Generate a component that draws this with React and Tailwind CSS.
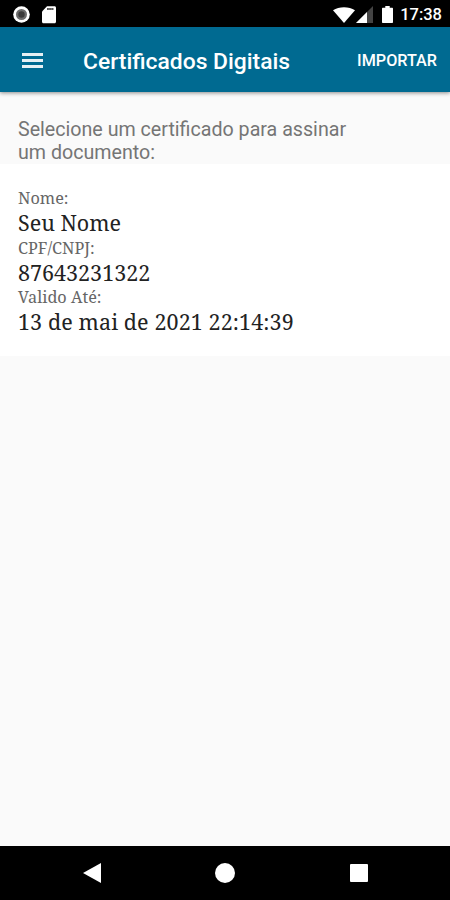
const fields = [
  { label: 'Nome:', value: 'Seu Nome', spacing: 'tracking-normal' },
  { label: 'CPF/CNPJ:', value: '87643231322', spacing: 'tracking-normal' },
  { label: 'Valido Até:', value: '13 de mai de 2021 22:14:39', spacing: 'tracking-[0.1px]' },
];

function StatusBar() {
  return (
    <div className="flex h-[27px] shrink-0 items-center bg-black pt-[2px] pr-[8px] pl-[13px] text-white">
      <svg className="h-[18px] w-[18px]" viewBox="0 0 18 18">
        <circle cx="8.5" cy="8.5" r="8.3" fill="#fff" />
        <circle cx="8.5" cy="8.5" r="5.5" fill="#6b6b6b" />
        <circle cx="8.5" cy="8.5" r="3.2" fill="#3a3a3a" />
      </svg>
      <svg className="ml-[11px] h-[18px] w-[14px]" viewBox="0 0 14 18">
        <path d="M5 .3h7.5c.9 0 1.5.6 1.5 1.5v14c0 .9-.6 1.5-1.5 1.5h-11C.6 17.3 0 16.7 0 15.8V5.5z" fill="#fff" />
        <path d="M5 3h6.500" stroke="#555" strokeWidth="2" />
        <path d="M7 2v2M9.300 2v2" stroke="#999" strokeWidth=".6" />
      </svg>
      <svg className="ml-auto h-[18px] w-[22px]" viewBox="0 0 22 18">
        <path d="M0 4.3C6 .2 16 .2 22 4.3L11 17z" fill="#fff" />
      </svg>
      <svg className="ml-[1px] h-[18px] w-[17px]" viewBox="0 0 17 18">
        <path d="M17 0v17H0z" fill="#444" />
        <path d="M11 6v11H0z" fill="#fff" />
      </svg>
      <svg className="ml-[9px] h-[18px] w-[11px]" viewBox="0 0 11 18">
        <path d="M3.3 0h4.4v1.7H10c.6 0 1 .4 1 1V16c0 .6-.4 1-1 1H1c-.6 0-1-.4-1-1V2.7c0-.6.4-1 1-1h2.300z" fill="#fff" />
      </svg>
      <span className="ml-[7px] pt-[2px] text-[16.500px] leading-none font-medium">17:38</span>
    </div>
  );
}

function AppBar() {
  return (
    <header className="z-10 flex h-[65px] shrink-0 items-center bg-[#006a91] pt-[2px] pr-[13px] pl-[22px] text-white shadow-[0_1px_4px_rgba(0,0,0,0.45)]">
      <button className="flex flex-col gap-[3px]" aria-label="Menu">
        <span className="h-[3px] w-[21px] bg-white/90" />
        <span className="h-[3px] w-[21px] bg-white/90" />
        <span className="h-[3px] w-[21px] bg-white/90" />
      </button>
      <h1 className="ml-[40px] pt-[4px] text-[22.850px] leading-none font-medium whitespace-nowrap">Certificados Digitais</h1>
      <button className="ml-auto pt-[2px] text-[16.200px] leading-none font-medium">IMPORTAR</button>
    </header>
  );
}

function CertificateCard() {
  return (
    <section className="h-[192px] bg-white pt-[23px] pl-[18px] font-['Noto_Serif',serif]">
      {fields.map((field) => (
        <div key={field.label} className="h-[49.500px] whitespace-nowrap">
          <p className="h-[23px] text-[16.250px] leading-[23px] text-[#666]">{field.label}</p>
          <p className={`h-[26px] text-[21.500px] leading-[26.500px] text-[#222] ${field.spacing}`}>{field.value}</p>
        </div>
      ))}
    </section>
  );
}

function NavBar() {
  return (
    <nav className="flex h-[54px] shrink-0 items-center bg-black pl-[83px]">
      <svg className="h-[20px] w-[18px]" viewBox="0 0 18 20">
        <path d="M18 0v20L0 10z" fill="#fff" />
      </svg>
      <span className="ml-[114px] h-[20px] w-[20px] rounded-full bg-white" />
      <span className="ml-[115px] h-[18px] w-[18px] rounded-[1px] bg-white" />
    </nav>
  );
}

export default function App() {
  return (
    <div className="flex h-[900px] w-[450px] flex-col overflow-hidden bg-[#fafafa] font-['Roboto',sans-serif]">
      <StatusBar />
      <AppBar />
      <main className="flex-1">
        <p className="h-[72px] pt-[26px] pl-[18px] text-[19.650px] leading-[23px] text-[#757575]">
          Selecione um certificado para assinar
          <br />
          um documento:
        </p>
        <CertificateCard />
      </main>
      <NavBar />
    </div>
  );
}
